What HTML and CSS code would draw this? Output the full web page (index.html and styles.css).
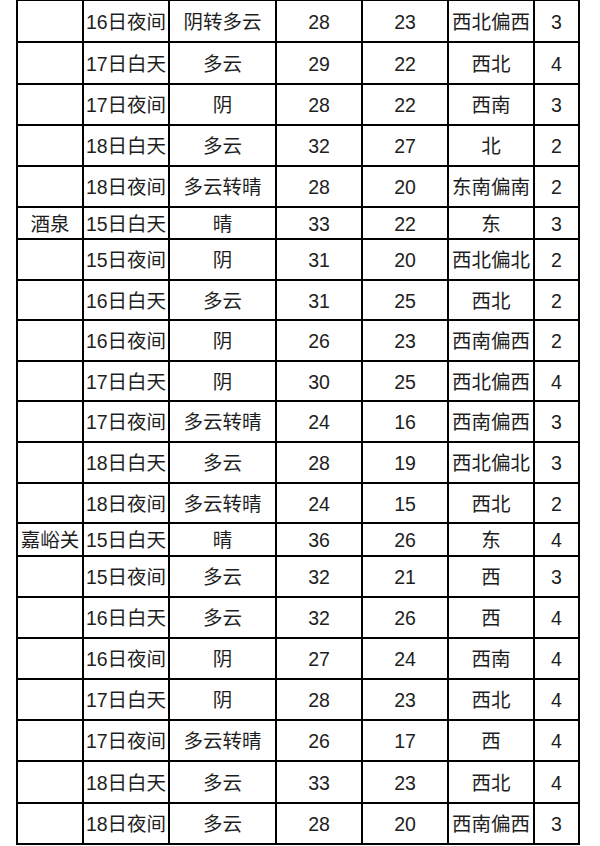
FILE: index.html
```html
<!DOCTYPE html>
<html lang="zh">
<head>
<meta charset="utf-8">
<title>天气预报</title>
<link rel="stylesheet" href="styles.css">
</head>
<body>
<div class="grid">
<div class="c"></div><div class="c">16日夜间</div><div class="c">阴转多云</div><div class="c">28</div><div class="c">23</div><div class="c">西北偏西</div><div class="c">3</div>
<div class="c"></div><div class="c">17日白天</div><div class="c">多云</div><div class="c">29</div><div class="c">22</div><div class="c">西北</div><div class="c">4</div>
<div class="c"></div><div class="c">17日夜间</div><div class="c">阴</div><div class="c">28</div><div class="c">22</div><div class="c">西南</div><div class="c">3</div>
<div class="c"></div><div class="c">18日白天</div><div class="c">多云</div><div class="c">32</div><div class="c">27</div><div class="c">北</div><div class="c">2</div>
<div class="c"></div><div class="c">18日夜间</div><div class="c">多云转晴</div><div class="c">28</div><div class="c">20</div><div class="c">东南偏南</div><div class="c">2</div>
<div class="c">酒泉</div><div class="c">15日白天</div><div class="c">晴</div><div class="c">33</div><div class="c">22</div><div class="c">东</div><div class="c">3</div>
<div class="c"></div><div class="c">15日夜间</div><div class="c">阴</div><div class="c">31</div><div class="c">20</div><div class="c">西北偏北</div><div class="c">2</div>
<div class="c"></div><div class="c">16日白天</div><div class="c">多云</div><div class="c">31</div><div class="c">25</div><div class="c">西北</div><div class="c">2</div>
<div class="c"></div><div class="c">16日夜间</div><div class="c">阴</div><div class="c">26</div><div class="c">23</div><div class="c">西南偏西</div><div class="c">2</div>
<div class="c"></div><div class="c">17日白天</div><div class="c">阴</div><div class="c">30</div><div class="c">25</div><div class="c">西北偏西</div><div class="c">4</div>
<div class="c"></div><div class="c">17日夜间</div><div class="c">多云转晴</div><div class="c">24</div><div class="c">16</div><div class="c">西南偏西</div><div class="c">3</div>
<div class="c"></div><div class="c">18日白天</div><div class="c">多云</div><div class="c">28</div><div class="c">19</div><div class="c">西北偏北</div><div class="c">3</div>
<div class="c"></div><div class="c">18日夜间</div><div class="c">多云转晴</div><div class="c">24</div><div class="c">15</div><div class="c">西北</div><div class="c">2</div>
<div class="c">嘉峪关</div><div class="c">15日白天</div><div class="c">晴</div><div class="c">36</div><div class="c">26</div><div class="c">东</div><div class="c">4</div>
<div class="c"></div><div class="c">15日夜间</div><div class="c">多云</div><div class="c">32</div><div class="c">21</div><div class="c">西</div><div class="c">3</div>
<div class="c"></div><div class="c">16日白天</div><div class="c">多云</div><div class="c">32</div><div class="c">26</div><div class="c">西</div><div class="c">4</div>
<div class="c"></div><div class="c">16日夜间</div><div class="c">阴</div><div class="c">27</div><div class="c">24</div><div class="c">西南</div><div class="c">4</div>
<div class="c"></div><div class="c">17日白天</div><div class="c">阴</div><div class="c">28</div><div class="c">23</div><div class="c">西北</div><div class="c">4</div>
<div class="c"></div><div class="c">17日夜间</div><div class="c">多云转晴</div><div class="c">26</div><div class="c">17</div><div class="c">西</div><div class="c">4</div>
<div class="c"></div><div class="c">18日白天</div><div class="c">多云</div><div class="c">33</div><div class="c">23</div><div class="c">西北</div><div class="c">4</div>
<div class="c"></div><div class="c">18日夜间</div><div class="c">多云</div><div class="c">28</div><div class="c">20</div><div class="c">西南偏西</div><div class="c">3</div>
</div>
</body>
</html>
```
FILE: styles.css
```css
html, body {
  margin: 0;
  padding: 0;
  background: #fff;
}
body {
  font-family: "Liberation Sans", "Noto Sans CJK SC", sans-serif;
  font-size: 19.5px;
  color: #1e1e1e;
}
.grid {
  display: grid;
  grid-template-columns: 64px 84px 105px 84px 84px 84px 43px;
  grid-template-rows: 40px 40px 39px 39px 39px 30px 39px 38px 39px 38px 39px 39px 38px 31px 39px 39px 39px 39px 39px 40px 39px;
  gap: 2px;
  padding: 2px;
  background: #000;
  width: max-content;
  margin: -1px 0 0 16px;
}
.c {
  background: #fff;
  display: flex;
  align-items: center;
  justify-content: center;
  white-space: nowrap;
  line-height: 1;
  padding-top: 3px;
}
```
